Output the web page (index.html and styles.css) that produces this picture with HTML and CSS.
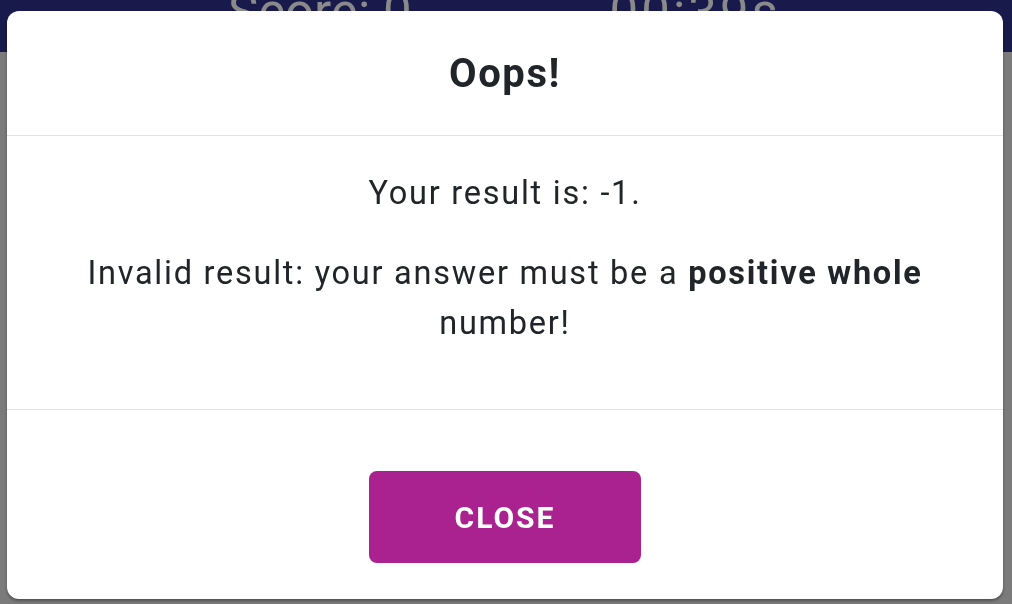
FILE: index.html
```html
<!DOCTYPE html>
<html lang="en">
<head>
<meta charset="utf-8">
<title>Oops!</title>
<link rel="stylesheet" href="styles.css">
</head>
<body>
<header class="topbar">
  <span class="stat score">Score: 0</span>
  <span class="stat timer">00:39s</span>
</header>
<div class="overlay">
  <div class="modal">
    <div class="modal-header">
      <h2 class="modal-title">Oops!</h2>
    </div>
    <div class="modal-body">
      <p class="line">Your result is: -1.</p>
      <p class="line">Invalid result: your answer must be a <strong>positive whole</strong> number!</p>
    </div>
    <div class="modal-footer">
      <button class="btn-close" type="button">CLOSE</button>
    </div>
  </div>
</div>
</body>
</html>
```
FILE: styles.css
```css
* { box-sizing: border-box; }
html, body { margin: 0; height: 100%; }
body {
  background: #7b7b7b;
  font-family: Roboto, "Liberation Sans", sans-serif;
  overflow: hidden;
}
.topbar {
  height: 52px;
  background: #191a4c;
  display: flex;
  align-items: flex-start;
  padding-left: 228px;
  gap: 198px;
  overflow: hidden;
}
.stat {
  color: #8a8a8a;
  font-size: 51px;
  line-height: 1;
  margin-top: -13px;
}
.timer { letter-spacing: 3px; }
.overlay {
  position: fixed;
  inset: 0;
  padding: 11px 9px 5px 7px;
  display: flex;
}
.modal {
  flex: 1;
  background: #fff;
  border-radius: 12px;
  box-shadow: 0 2px 3px rgba(0,0,0,0.35);
  display: flex;
  flex-direction: column;
  color: #212529;
}
.modal-header {
  height: 125px;
  border-bottom: 1px solid #dee2e6;
  display: flex;
  align-items: center;
  justify-content: center;
}
.modal-title {
  margin: 0;
  font-size: 40px;
  font-weight: 700;
  letter-spacing: 1.6px;
}
.modal-body {
  height: 274px;
  border-bottom: 1px solid #dee2e6;
  padding: 32px 40px 0;
  text-align: center;
  font-size: 32.5px;
  letter-spacing: 1.75px;
  line-height: 50px;
}
.line { margin: 0 0 30px; }
.modal-footer {
  flex: 1;
  display: flex;
  justify-content: center;
  padding-top: 61px;
}
.btn-close {
  width: 272px;
  height: 92px;
  border: 0;
  border-radius: 8px;
  background: #aa2190;
  color: #fff;
  font-family: inherit;
  font-size: 30px;
  font-weight: 700;
  letter-spacing: 2px;
}
```
